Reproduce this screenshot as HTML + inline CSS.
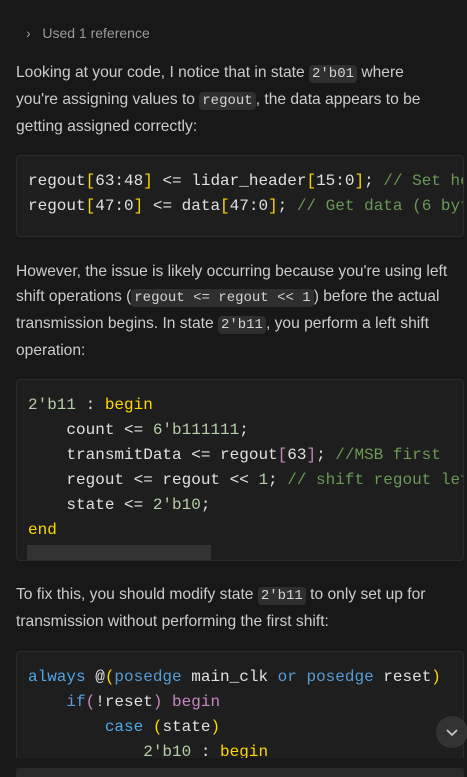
<!DOCTYPE html>
<html><head><meta charset="utf-8"><style>
*{margin:0;padding:0;box-sizing:border-box}
html,body{width:467px;height:777px;overflow:hidden;background:#181818}
body{position:relative;font-family:"Liberation Sans",sans-serif;color:#cccccc;font-size:15.6px}
.p{position:absolute;left:16px;width:460px;line-height:25px;white-space:nowrap}
.ic{font-family:"Liberation Mono",monospace;font-size:14px;background:#2f2f2f;border-radius:4px;padding:1px 3px;color:#d4d4d4}
.cb{position:absolute;left:16px;width:448px;background:#1e1e1e;border:1px solid #2c2c2c;border-radius:4px;overflow:hidden}
.code{position:absolute;left:11px;font-family:"Liberation Mono",monospace;font-size:16px;line-height:25px;white-space:pre;color:#e0e0e0}
.y{color:#ffd700}.g{color:#6a9955}.n{color:#b5cea8}.b{color:#569cd6}.k{color:#c586c0}.bl{color:#4fa8e8}
</style></head><body>
<div style="position:absolute;left:26px;top:25px;font-size:14px;color:#9a9a9a">›&nbsp;&nbsp; Used 1 reference</div>
<div class="p" style="top:60px">Looking at your code, I notice that in state <span class="ic">2'b01</span> where<br>you're assigning values to <span class="ic">regout</span>, the data appears to be<br>getting assigned correctly:</div>
<div class="cb" style="top:155px;height:82px"><div class="code" style="top:13px">regout<span class="y">[</span>63:48<span class="y">]</span> &lt;= lidar_header<span class="y">[</span>15:0<span class="y">]</span>; <span class="g">// Set header</span>
regout<span class="y">[</span>47:0<span class="y">]</span> &lt;= data<span class="y">[</span>47:0<span class="y">]</span>; <span class="g">// Get data (6 bytes)</span></div></div>
<div class="p" style="top:259px">However, the issue is likely occurring because you're using left<br>shift operations (<span class="ic">regout &lt;= regout &lt;&lt; 1</span>) before the actual<br>transmission begins. In state <span class="ic">2'b11</span>, you perform a left shift<br>operation:</div>
<div class="cb" style="top:379px;height:182px"><div class="code" style="top:13px"><span class="n">2'b11</span> : <span class="y">begin</span>
    count &lt;= <span class="n">6'b111111</span>;
    transmitData &lt;= regout<span class="k">[</span>63<span class="k">]</span>; <span class="g">//MSB first</span>
    regout &lt;= regout &lt;&lt; <span class="n">1</span>; <span class="g">// shift regout left</span>
    state &lt;= <span class="n">2'b10</span>;
<span class="y">end</span></div>
<div style="position:absolute;left:10px;top:165px;width:184px;height:16px;background:#333"></div></div>
<div class="p" style="top:582px">To fix this, you should modify state <span class="ic">2'b11</span> to only set up for<br>transmission without performing the first shift:</div>
<div class="cb" style="top:651px;height:120px;border-bottom:none"><div class="code" style="top:13px"><span class="bl">always</span> @<span class="y">(</span><span class="b">posedge</span> main_clk <span class="b">or</span> <span class="b">posedge</span> reset<span class="y">)</span>
    <span class="b">if</span><span class="k">(</span>!reset<span class="k">)</span> <span class="k">begin</span>
        <span class="bl">case</span> <span class="y">(</span>state<span class="y">)</span>
            <span class="n">2'b10</span> : <span class="y">begin</span></div></div>
<div style="position:absolute;left:0;top:758px;width:467px;height:10px;background:#181818"></div>
<div style="position:absolute;left:16px;top:768px;width:448px;height:12px;background:#2a2a2a;border-radius:4px"></div>
<div style="position:absolute;left:436px;top:716px;width:32px;height:32px;border-radius:50%;background:#333;"><svg width="32" height="32" viewBox="0 0 32 32" style="position:absolute;left:0;top:0"><path d="M11 14 L16 19 L21 14" fill="none" stroke="#ccc" stroke-width="1.6"/></svg></div>
</body></html>
